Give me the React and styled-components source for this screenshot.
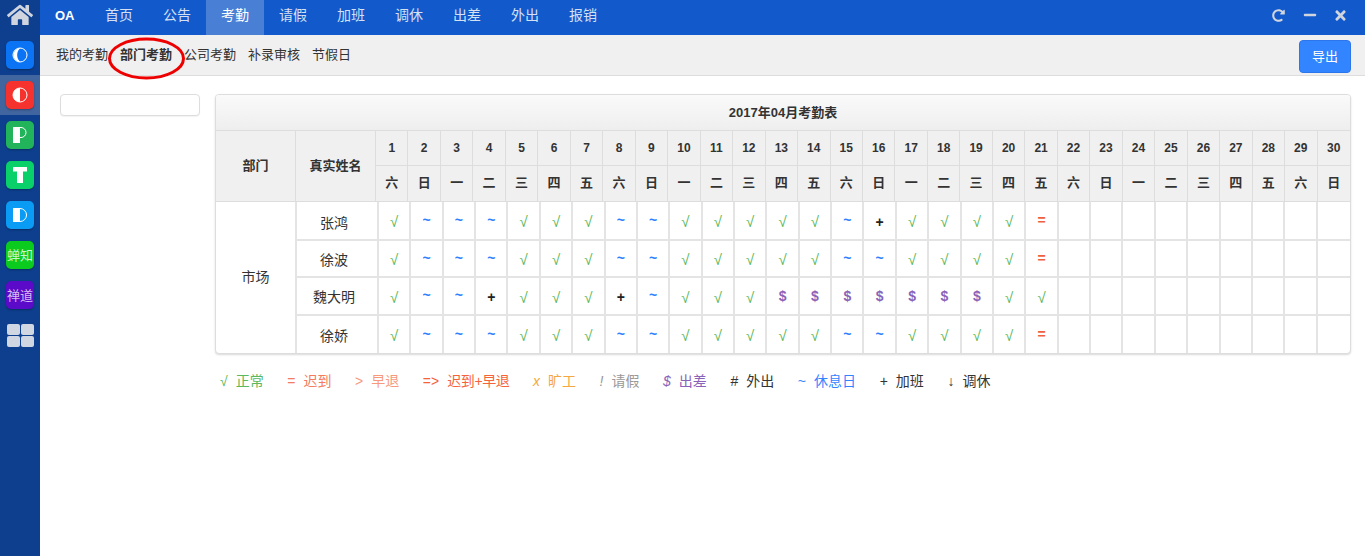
import React from "react";
import styled, { createGlobalStyle } from "styled-components";
import { FaHome, FaRedoAlt, FaMinus, FaTimes } from "react-icons/fa";

const FONT = `"Liberation Sans", "Noto Sans CJK SC", sans-serif`;

const GlobalStyle = createGlobalStyle`
  html, body { margin: 0; padding: 0; height: 100%; background: #fff; }
  body { font-family: ${FONT}; font-size: 13px; color: #333; }
  * { box-sizing: border-box; }
`;

const Page = styled.div`
  position: relative;
  display: flex;
  width: 1365px;
  height: 556px;
  overflow: hidden;
`;

const Sidebar = styled.aside`
  flex: 0 0 40px;
  display: flex;
  flex-direction: column;
  background: #0e3f8e;
`;

const HomeLink = styled.div`
  height: 35px;
  display: flex;
  justify-content: center;
  align-items: center;
  color: #cfd4de;
  padding-bottom: 6px;
  font-size: 26px;
`;

const AppRow = styled.div`
  height: 40px;
  display: flex;
  align-items: center;
  justify-content: center;
  background: ${p => (p.$active ? "#40659f" : "transparent")};
`;

const AppTile = styled.div`
  width: 28px;
  height: 28px;
  border-radius: 5px;
  display: flex;
  align-items: center;
  justify-content: center;
  background: ${p => p.$bg};
  color: ${p => p.$ink || "#fff"};
  font-size: 13px;
  line-height: 1;
  white-space: nowrap;
  box-shadow: 0 1px 2px rgba(0, 0, 0, 0.3);
`;

const GridIcon = styled.div`
  display: grid;
  grid-template-columns: 13px 13px;
  grid-template-rows: 11px 11px;
  gap: 1px;
  span {
    background: #d0d6e2;
    border-radius: 2px;
  }
`;

const Main = styled.div`
  flex: 1;
  min-width: 0;
  display: flex;
  flex-direction: column;
`;

const TopBar = styled.header`
  height: 35px;
  display: flex;
  align-items: stretch;
  background: #1259cb;
  color: #d6e0f3;
  font-size: 14px;
`;

const Brand = styled.div`
  width: 50px;
  padding: 0 0 5px 15px;
  display: flex;
  align-items: center;
  font-weight: bold;
  font-size: 13px;
  color: #fff;
`;

const Tab = styled.div`
  width: 58px;
  padding-bottom: 7px;
  display: flex;
  align-items: center;
  justify-content: center;
  background: ${p => (p.$active ? "#4a7fd6" : "transparent")};
  color: ${p => (p.$active ? "#fff" : "#d6e0f3")};
`;

const WindowButtons = styled.div`
  margin-left: auto;
  padding: 0 9px 5px 0;
  display: flex;
  align-items: center;
  color: #d0d5de;
`;

const WindowButton = styled.span`
  width: 31px;
  display: flex;
  justify-content: center;
  font-size: ${p => p.$size}px;
`;

const SubBar = styled.nav`
  height: 41px;
  padding: 0 14px 0 16px;
  display: flex;
  align-items: center;
  gap: 12px;
  background: #f0f0f0;
  border-bottom: 1px solid #ddd;
`;

const SubItem = styled.span`
  padding-bottom: 4px;
  font-weight: ${p => (p.$active ? "bold" : "normal")};
`;

const ExportButton = styled.button`
  margin: 3px 0 0 auto;
  width: 52px;
  height: 33px;
  padding: 0 0 3px;
  border: 1px solid #2d75ea;
  border-radius: 4px;
  background: #3385ff;
  color: #fff;
  font: 13px ${FONT};
`;

const Content = styled.div`
  flex: 1;
  display: flex;
  align-items: flex-start;
  gap: 15px;
  padding: 18px 14px 0 20px;
`;

const SearchBox = styled.input`
  flex: 0 0 140px;
  width: 140px;
  height: 22px;
  border: 1px solid #ddd;
  border-radius: 4px;
  background: #fff;
  box-shadow: 0 1px 1px rgba(0, 0, 0, 0.05);
`;

const Right = styled.div`
  flex: 1;
  min-width: 0;
`;

const Panel = styled.section`
  border: 1px solid #ddd;
  border-radius: 4px;
  background: #fff;
  box-shadow: 0 1px 2px rgba(0, 0, 0, 0.15);
  overflow: hidden;
`;

const PanelTitle = styled.div`
  height: 36px;
  padding-bottom: 3px;
  display: flex;
  align-items: center;
  justify-content: center;
  font-weight: bold;
  font-size: 13px;
  background: linear-gradient(#fafafa, #eeeeee);
  border-bottom: 1px solid #ddd;
`;

const HeadGrid = styled.div`
  display: grid;
  grid-template-columns: 80px 80px repeat(30, 1fr);
  grid-template-rows: 35px 35px;
  background: #f0f0f0;
  border-bottom: 1px solid #ddd;
`;

const HeadCell = styled.div`
  display: flex;
  align-items: center;
  justify-content: center;
  padding-bottom: ${p => (p.$top ? "0" : "4px")};
  font-weight: bold;
  font-size: ${p => (p.$top ? "12px" : "13px")};
  border-right: ${p => (p.$end ? "0" : "1px solid #ddd")};
  border-bottom: ${p => (p.$top ? "1px solid #ddd" : "0")};
  grid-row: ${p => (p.$span ? "1 / span 2" : "auto")};
`;

const BodyGrid = styled.div`
  display: grid;
  grid-template-columns: 81px 82px repeat(30, 1fr);
  grid-template-rows: 39px 37px 38px 37px;
`;

const DeptCell = styled.div`
  grid-row: 1 / span 4;
  padding-bottom: 4px;
  font-size: 14px;
  display: flex;
  align-items: center;
  justify-content: center;
  border-right: 2px solid #e4e4e4;
`;

const NameCell = styled.div`
  display: flex;
  align-items: center;
  justify-content: center;
  padding: ${p => (p.$first ? "3px" : "0")} 6px 0 0;
  font-size: 14px;
  border-right: 2px solid #e4e4e4;
  border-bottom: ${p => (p.$last ? "0" : "2px solid #e4e4e4")};
`;

const MARK_STYLES = {
  "√": { color: "#5cb85c", weight: "normal", size: 15, shift: "2px 0 0 0" },
  "~": { color: "#2f80ff", weight: "bold", size: 14, shift: "0 0 2px 0" },
  "+": { color: "#222", weight: "bold", size: 14, shift: "2px 0 0 0" },
  "=": { color: "#f0603c", weight: "bold", size: 14, shift: "0 0 1px 0" },
  $: { color: "#8a63b8", weight: "bold", size: 14, shift: "0 0 1px 0" },
};

const markStyle = mark =>
  MARK_STYLES[mark] || { color: "#333", weight: "normal", size: 13, shift: "0" };

const MarkCell = styled.div`
  display: flex;
  align-items: center;
  justify-content: center;
  padding: ${p => markStyle(p.$mark).shift};
  font-weight: ${p => markStyle(p.$mark).weight};
  font-size: ${p => markStyle(p.$mark).size}px;
  color: ${p => markStyle(p.$mark).color};
  border-right: ${p => (p.$end ? "0" : "2px solid #e4e4e4")};
  border-bottom: ${p => (p.$last ? "0" : "2px solid #e4e4e4")};
`;

const Legend = styled.div`
  display: flex;
  gap: 23.6px;
  padding: 15px 0 0 5px;
  font-size: 14px;
`;

const LegendItem = styled.span`
  display: flex;
  gap: 8px;
  color: ${p => p.$color};
`;

const LegendMark = styled.i`
  font-style: ${p => (p.$plain ? "normal" : "italic")};
  line-height: 24px;
`;

const LegendLabel = styled.span`
  line-height: 24px;
  letter-spacing: ${p => (p.$tight ? "-0.4px" : "0")};
`;

const Annotation = styled.svg`
  position: absolute;
  left: 105px;
  top: 36px;
  pointer-events: none;
`;

const TABS = ["首页", "公告", "考勤", "请假", "加班", "调休", "出差", "外出", "报销"];
const SUB_ITEMS = ["我的考勤", "部门考勤", "公司考勤", "补录审核", "节假日"];
const WEEK = ["日", "一", "二", "三", "四", "五", "六"];
const DAYS = Array.from({ length: 30 }, (_, i) => i + 1);

const ROWS = [
  { name: "张鸿", marks: "√~~~√√√~~√√√√√~+√√√√=" },
  { name: "徐波", marks: "√~~~√√√~~√√√√√~~√√√√=" },
  { name: "魏大明", marks: "√~~+√√√+~√√√$$$$$$$√√" },
  { name: "徐娇", marks: "√~~~√√√~~√√√√√~~√√√√=" },
];

const LEGEND = [
  { mark: "√", label: "正常", color: "#5cb85c", plain: true },
  { mark: "=", label: "迟到", color: "#f47a60", plain: true },
  { mark: ">", label: "早退", color: "#f79a7c", plain: true },
  { mark: "=>", label: "迟到+早退", color: "#f4633a", plain: true, tight: true },
  { mark: "x", label: "旷工", color: "#f5a742" },
  { mark: "!", label: "请假", color: "#999" },
  { mark: "$", label: "出差", color: "#8a63b8" },
  { mark: "#", label: "外出", color: "#333", plain: true },
  { mark: "~", label: "休息日", color: "#3385ff", plain: true },
  { mark: "+", label: "加班", color: "#333", plain: true },
  { mark: "↓", label: "调休", color: "#333", plain: true },
];

// launcher logos: white half with a thin outline for the rest
const CircleLogo = ({ concave }) => (
  <svg width="16" height="16" viewBox="0 0 16 16">
    <circle cx="8" cy="8" r="7" fill="none" stroke="#fff" strokeWidth="1" />
    <path
      d={concave ? "M8.5 1a7 7 0 1 0 0 14a9 9 0 0 1 0-14z" : "M8 1a7 7 0 0 0 0 14z"}
      fill="#fff"
    />
  </svg>
);

const LetterLogo = ({ letter }) => (
  <svg width="14" height="16" viewBox="0 0 14 16">
    {letter === "P" && (
      <>
        <rect x="0" y="0" width="7" height="16" fill="#fff" />
        <path d="M7 .5h1a5 5 0 0 1 0 10H7" fill="none" stroke="#fff" />
      </>
    )}
    {letter === "T" && (
      <>
        <rect x="0" y="0" width="14" height="4.5" fill="#fff" />
        <rect x="4" y="0" width="6" height="16" fill="#fff" />
      </>
    )}
    {letter === "D" && (
      <>
        <rect x="0" y="1" width="7" height="14" fill="#fff" />
        <path d="M7 1.5a6.5 6.5 0 0 1 0 13" fill="none" stroke="#fff" />
      </>
    )}
  </svg>
);

const App = () => (
  <Page>
    <GlobalStyle />
    <Sidebar>
      <HomeLink>
        <FaHome />
      </HomeLink>
      <AppRow>
        <AppTile $bg="#0a74f5"><CircleLogo concave /></AppTile>
      </AppRow>
      <AppRow $active>
        <AppTile $bg="#f5322d"><CircleLogo /></AppTile>
      </AppRow>
      <AppRow>
        <AppTile $bg="#22b45a"><LetterLogo letter="P" /></AppTile>
      </AppRow>
      <AppRow>
        <AppTile $bg="#0ad06a"><LetterLogo letter="T" /></AppTile>
      </AppRow>
      <AppRow>
        <AppTile $bg="#0a9cf5"><LetterLogo letter="D" /></AppTile>
      </AppRow>
      <AppRow>
        <AppTile $bg="#0acb1e" $ink="#c8f5cc">蝉知</AppTile>
      </AppRow>
      <AppRow>
        <AppTile $bg="#5a0ac8" $ink="#d5bdf2">禅道</AppTile>
      </AppRow>
      <AppRow>
        <GridIcon><span /><span /><span /><span /></GridIcon>
      </AppRow>
    </Sidebar>
    <Main>
      <TopBar>
        <Brand>OA</Brand>
        {TABS.map(t => (
          <Tab key={t} $active={t === "考勤"}>{t}</Tab>
        ))}
        <WindowButtons>
          <WindowButton $size={13}><FaRedoAlt /></WindowButton>
          <WindowButton $size={14}><FaMinus /></WindowButton>
          <WindowButton $size={15}><FaTimes /></WindowButton>
        </WindowButtons>
      </TopBar>
      <SubBar>
        {SUB_ITEMS.map(s => (
          <SubItem key={s} $active={s === "部门考勤"}>{s}</SubItem>
        ))}
        <ExportButton>导出</ExportButton>
      </SubBar>
      <Content>
        <SearchBox />
        <Right>
          <Panel>
            <PanelTitle>2017年04月考勤表</PanelTitle>
            <HeadGrid>
              <HeadCell $span>部门</HeadCell>
              <HeadCell $span>真实姓名</HeadCell>
              {DAYS.map(d => (
                <HeadCell key={d} $top $end={d === 30}>{d}</HeadCell>
              ))}
              {DAYS.map(d => (
                <HeadCell key={d} $end={d === 30}>{WEEK[(d + 5) % 7]}</HeadCell>
              ))}
            </HeadGrid>
            <BodyGrid>
              <DeptCell>市场</DeptCell>
              {ROWS.map((row, r) => {
                const last = r === ROWS.length - 1;
                return (
                  <React.Fragment key={row.name}>
                    <NameCell $first={r === 0} $last={last}>{row.name}</NameCell>
                    {DAYS.map(d => (
                      <MarkCell key={d} $last={last} $end={d === 30} $mark={row.marks[d - 1]}>
                        {row.marks[d - 1]}
                      </MarkCell>
                    ))}
                  </React.Fragment>
                );
              })}
            </BodyGrid>
          </Panel>
          <Legend>
            {LEGEND.map(l => (
              <LegendItem key={l.label} $color={l.color}>
                <LegendMark $plain={l.plain}>{l.mark}</LegendMark>
                <LegendLabel $tight={l.tight}>{l.label}</LegendLabel>
              </LegendItem>
            ))}
          </Legend>
        </Right>
      </Content>
    </Main>
    <Annotation width="84" height="46" viewBox="0 0 84 46">
      <ellipse cx="41.5" cy="22.5" rx="37" ry="19.5" fill="none" stroke="#ee0000" strokeWidth="3" />
    </Annotation>
  </Page>
);

export default App;
